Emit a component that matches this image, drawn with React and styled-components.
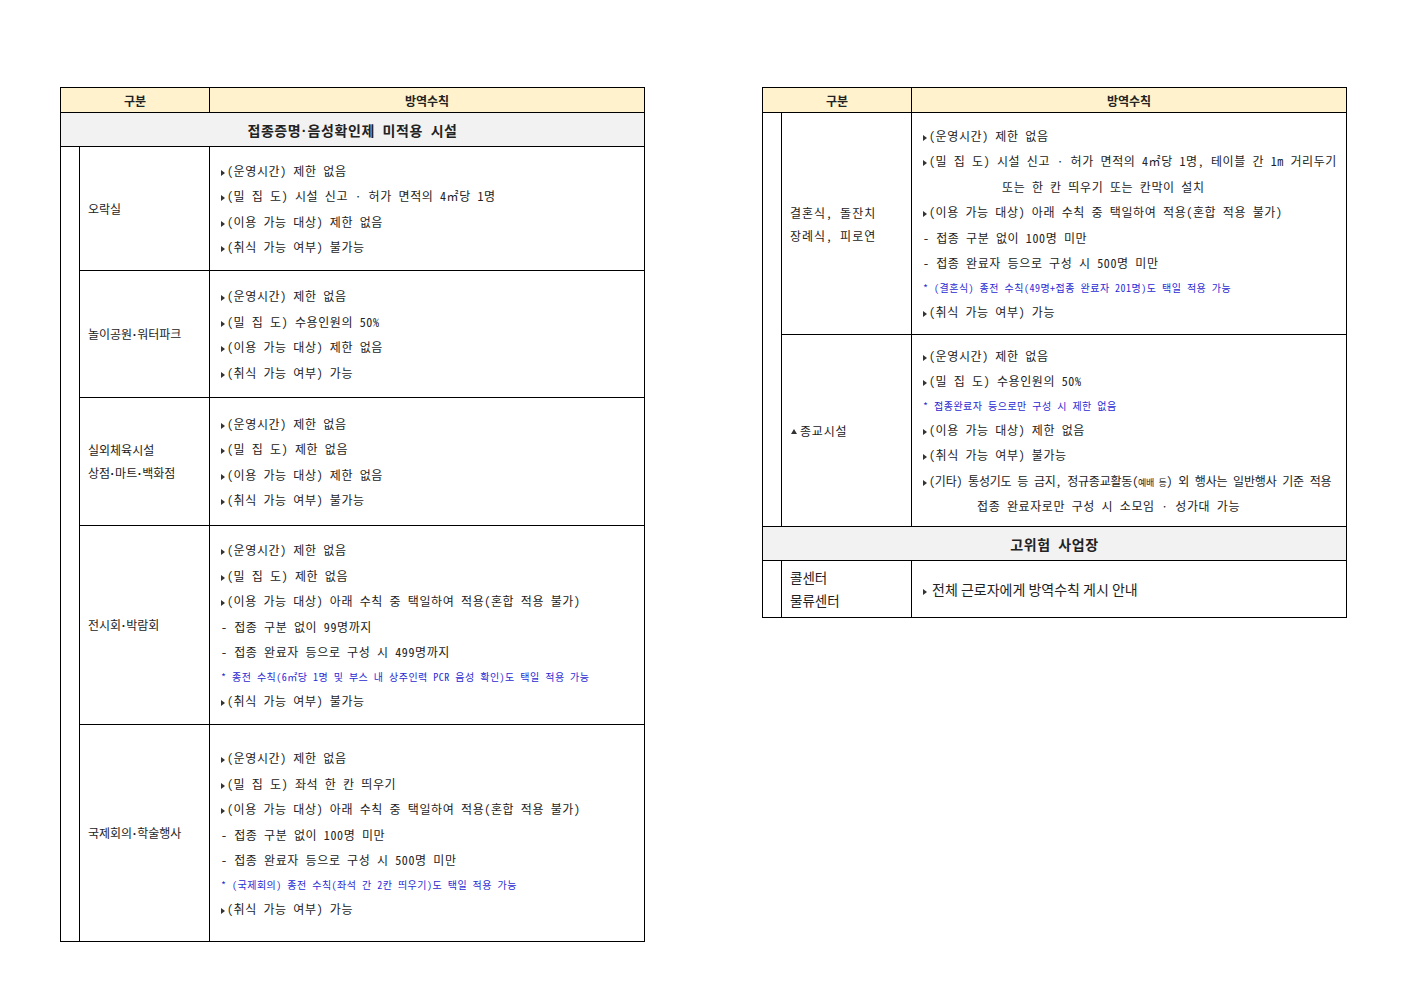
import React from 'react';
import styled, { createGlobalStyle } from 'styled-components';

const GlobalStyle = createGlobalStyle`
  html, body {
    margin: 0;
    padding: 0;
    background: #ffffff;
  }
  body {
    font-family: "Noto Sans CJK KR", "Noto Sans", sans-serif;
    color: #222222;
  }
`;

const MONO = `"Noto Sans Mono CJK KR", "Noto Sans CJK KR", monospace`;

const Page = styled.div`
  display: flex;
  align-items: flex-start;
  gap: 117px;
  padding: 87px 0 0 60px;
  width: 1403px;
  height: 992px;
  box-sizing: border-box;
`;

const Table = styled.table`
  border-collapse: collapse;
  table-layout: fixed;
  width: 584px;
  border: 1px solid #000;
`;

const Head = styled.th`
  height: 24px;
  padding: 0;
  background: #fff2cc;
  border: 1px solid #000;
  font-family: ${MONO};
  font-size: 12px;
  font-weight: bold;
  text-align: center;
  vertical-align: middle;
`;

const Row = styled.tr`
  height: ${(p) => p.$h}px;
`;

const Section = styled.td`
  padding: 0;
  background: #f2f2f2;
  border: 1px solid #000;
  font-family: ${MONO};
  font-size: 14px;
  font-weight: bold;
  letter-spacing: 0.6px;
  text-align: center;
  vertical-align: middle;
`;

const Band = styled.td`
  padding: 0;
  border: 1px solid #000;
`;

const Label = styled.td`
  padding: 0 0 0 ${(p) => (p.$pad ?? 8)}px;
  border: 1px solid #000;
  font-family: ${(p) => (p.$mono ? MONO : `"Noto Sans CJK KR", sans-serif`)};
  font-size: ${(p) => p.$size || 12}px;
  letter-spacing: ${(p) => p.$ls || 0}px;
  line-height: 23px;
  vertical-align: middle;
  white-space: nowrap;
`;

const Dot = styled.span`
  font-family: "Liberation Sans", sans-serif;
  font-weight: bold;
  margin: 0 0.5px;
`;

const Body = styled.td`
  padding: 0 4px 0 11px;
  border: 1px solid #000;
  font-family: ${MONO};
  font-size: 12px;
  letter-spacing: 0.6px;
  vertical-align: middle;
`;

const Line = styled.div`
  height: 25.5px;
  line-height: 25.5px;
  white-space: nowrap;
  padding-left: ${(p) => p.$indent || 0}px;
  letter-spacing: ${(p) => (p.$tight ? '-0.2px' : 'inherit')};
`;

const Note = styled.div`
  height: 23px;
  line-height: 23px;
  white-space: nowrap;
  font-size: 10px;
  letter-spacing: 0.5px;
  color: #2a2ad2;
`;

const Small = styled.span`
  font-size: 9px;
`;

const Arrow = styled.span`
  display: inline-block;
  width: 0;
  height: 0;
  border-left: 4px solid #333;
  border-top: 3px solid transparent;
  border-bottom: 3px solid transparent;
  margin-right: ${(p) => p.$gap ?? 2}px;
  vertical-align: 0;
`;

const UpArrow = styled.span`
  display: inline-block;
  width: 0;
  height: 0;
  border-bottom: 5px solid #333;
  border-left: 3px solid transparent;
  border-right: 3px solid transparent;
  margin-right: 3px;
  vertical-align: 2px;
`;

const Plain = styled.div`
  font-family: "Noto Sans CJK KR", sans-serif;
  font-size: 14px;
  letter-spacing: 0;
  white-space: nowrap;
`;

const Items = ({ items }) =>
  items.map((it, i) => {
    if (it.t === 'n') return <Note key={i}>{it.text}</Note>;
    if (it.t === 'd') return <Line key={i}>{it.text}</Line>;
    if (it.t === 'i')
      return (
        <Line key={i} $indent={it.indent}>
          {it.text}
        </Line>
      );
    return (
      <Line key={i}>
        <Arrow />
        {it.text}
      </Line>
    );
  });

const b = (text) => ({ t: 'b', text });
const d = (text) => ({ t: 'd', text });
const n = (text) => ({ t: 'n', text });

const leftRows = [
  {
    h: 124,
    label: ['오락실'],
    items: [
      b('(운영시간) 제한 없음'),
      b('(밀 집 도) 시설 신고 · 허가 면적의 4㎡당 1명'),
      b('(이용 가능 대상) 제한 없음'),
      b('(취식 가능 여부) 불가능'),
    ],
  },
  {
    h: 127,
    label: [['놀이공원', '워터파크']],
    items: [
      b('(운영시간) 제한 없음'),
      b('(밀 집 도) 수용인원의 50%'),
      b('(이용 가능 대상) 제한 없음'),
      b('(취식 가능 여부) 가능'),
    ],
  },
  {
    h: 128,
    label: [['실외체육시설'], ['상점', '마트', '백화점']],
    items: [
      b('(운영시간) 제한 없음'),
      b('(밀 집 도) 제한 없음'),
      b('(이용 가능 대상) 제한 없음'),
      b('(취식 가능 여부) 불가능'),
    ],
  },
  {
    h: 199,
    label: [['전시회', '박람회']],
    items: [
      b('(운영시간) 제한 없음'),
      b('(밀 집 도) 제한 없음'),
      b('(이용 가능 대상) 아래 수칙 중 택일하여 적용(혼합 적용 불가)'),
      d('- 접종 구분 없이 99명까지'),
      d('- 접종 완료자 등으로 구성 시 499명까지'),
      n('* 종전 수칙(6㎡당 1명 및 부스 내 상주인력 PCR 음성 확인)도 택일 적용 가능'),
      b('(취식 가능 여부) 불가능'),
    ],
  },
  {
    h: 217,
    label: [['국제회의', '학술행사']],
    items: [
      b('(운영시간) 제한 없음'),
      b('(밀 집 도) 좌석 한 칸 띄우기'),
      b('(이용 가능 대상) 아래 수칙 중 택일하여 적용(혼합 적용 불가)'),
      d('- 접종 구분 없이 100명 미만'),
      d('- 접종 완료자 등으로 구성 시 500명 미만'),
      n('* (국제회의) 종전 수칙(좌석 간 2칸 띄우기)도 택일 적용 가능'),
      b('(취식 가능 여부) 가능'),
    ],
  },
];

const weddingItems = [
  b('(운영시간) 제한 없음'),
  b('(밀 집 도) 시설 신고 · 허가 면적의 4㎡당 1명, 테이블 간 1m 거리두기'),
  { t: 'i', text: '또는 한 칸 띄우기 또는 칸막이 설치', indent: 79 },
  b('(이용 가능 대상) 아래 수칙 중 택일하여 적용(혼합 적용 불가)'),
  d('- 접종 구분 없이 100명 미만'),
  d('- 접종 완료자 등으로 구성 시 500명 미만'),
  n('* (결혼식) 종전 수칙(49명+접종 완료자 201명)도 택일 적용 가능'),
  b('(취식 가능 여부) 가능'),
];

// label parts are joined by a narrow middle dot
const LabelText = ({ parts }) => {
  const list = Array.isArray(parts) ? parts : [parts];
  return (
    <div>
      {list.map((p, i) => (
        <React.Fragment key={i}>
          {i > 0 && <Dot>·</Dot>}
          {p}
        </React.Fragment>
      ))}
    </div>
  );
};

const Cols = () => (
  <colgroup>
    <col style={{ width: 19 }} />
    <col style={{ width: 130 }} />
    <col style={{ width: 435 }} />
  </colgroup>
);

const HeadRow = () => (
  <thead>
    <tr>
      <Head colSpan={2}>구분</Head>
      <Head>방역수칙</Head>
    </tr>
  </thead>
);

const LeftTable = () => (
  <Table>
    <Cols />
    <HeadRow />
    <tbody>
      <Row $h={34}>
        <Section colSpan={3}>
          접종증명<Dot>·</Dot>음성확인제 미적용 시설
        </Section>
      </Row>
      {leftRows.map((r, i) => (
        <Row key={i} $h={r.h}>
          {i === 0 && <Band rowSpan={leftRows.length} />}
          <Label>
            {r.label.map((l, j) => (
              <LabelText key={j} parts={l} />
            ))}
          </Label>
          <Body>
            <Items items={r.items} />
          </Body>
        </Row>
      ))}
    </tbody>
  </Table>
);

const RightTable = () => (
  <Table>
    <Cols />
    <HeadRow />
    <tbody>
      <Row $h={222}>
        <Band rowSpan={2} />
        <Label $mono $ls={1}>
          <div>결혼식, 돌잔치</div>
          <div>장례식, 피로연</div>
        </Label>
        <Body>
          <Items items={weddingItems} />
        </Body>
      </Row>
      <Row $h={192}>
        <Label $mono $ls={0.8} $pad={9}>
          <UpArrow />
          종교시설
        </Label>
        <Body>
          <Line>
            <Arrow />
            (운영시간) 제한 없음
          </Line>
          <Line>
            <Arrow />
            (밀 집 도) 수용인원의 50%
          </Line>
          <Note>* 접종완료자 등으로만 구성 시 제한 없음</Note>
          <Line>
            <Arrow />
            (이용 가능 대상) 제한 없음
          </Line>
          <Line>
            <Arrow />
            (취식 가능 여부) 불가능
          </Line>
          <Line $tight>
            <Arrow />
            (기타) 통성기도 등 금지, 정규종교활동(<Small>예배 등</Small>) 외 행사는 일반행사 기준 적용
          </Line>
          <Line $indent={54}>접종 완료자로만 구성 시 소모임 · 성가대 가능</Line>
        </Body>
      </Row>
      <Row $h={34}>
        <Section colSpan={3}>고위험 사업장</Section>
      </Row>
      <Row $h={57}>
        <Band />
        <Label $size={13.5}>
          <div>콜센터</div>
          <div>물류센터</div>
        </Label>
        <Body>
          <Plain>
            <Arrow $gap={5} />
            전체 근로자에게 방역수칙 게시 안내
          </Plain>
        </Body>
      </Row>
    </tbody>
  </Table>
);

export default function App() {
  return (
    <>
      <GlobalStyle />
      <Page>
        <LeftTable />
        <RightTable />
      </Page>
    </>
  );
}
